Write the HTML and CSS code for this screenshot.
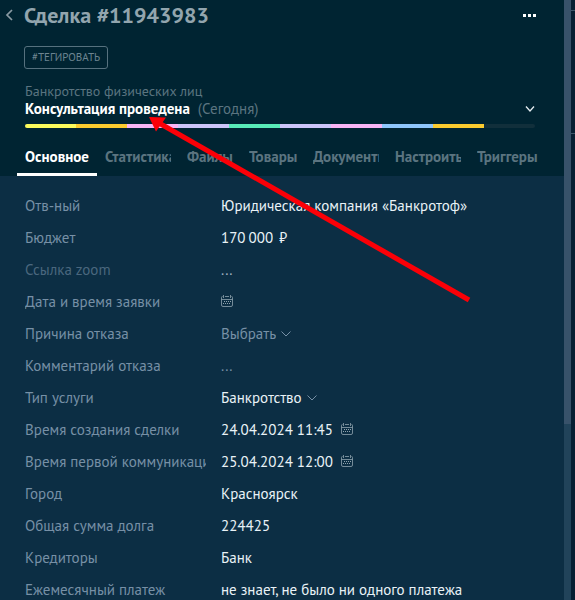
FILE: index.html
```html
<!DOCTYPE html>
<html lang="ru">
<head>
<meta charset="utf-8">
<meta name="viewport" content="width=device-width, initial-scale=1">
<title>Сделка #11943983</title>
<link rel="stylesheet" href="styles.css">
</head>
<body>
<svg class="defs" aria-hidden="true">
  <symbol id="calendar" viewBox="0 0 12 12">
    <path d="M1.500 1.500a1 1 0 0 0-1 1v7.500A1.500 1.500 0 0 0 2 11.500h8a1.500 1.500 0 0 0 1.500-1.500V2.500a1 1 0 0 0-1-1M4 1.500h4M2.500 0v3M9.500 0v3M.5 4.500h11" fill="none" stroke="currentColor" stroke-width=".8"/>
    <path d="M3 6.500h7M2 8.500h7" fill="none" stroke="currentColor" stroke-dasharray="1 1"/>
  </symbol>
  <symbol id="chevron" viewBox="0 0 10 6">
    <path d="M.5.5 5 5 9.500.5" fill="none" stroke="currentColor"/>
  </symbol>
</svg>
<div class="app">
  <main class="card">
    <header class="head">
      <div class="title-row">
        <button class="icon-btn back" aria-label="Назад">
          <svg width="8" height="12" viewBox="0 0 8 12"><path d="M7 1 2 6l5 5" fill="none" stroke="currentColor" stroke-width="1.700"/></svg>
        </button>
        <h1 class="title">Сделка #11943983</h1>
        <button class="icon-btn more" aria-label="Ещё">
          <svg width="13" height="3" viewBox="0 0 13 3"><path d="M0 0h3v3H0zM5 0h3v3H5zM10 0h3v3h-3z" fill="currentColor"/></svg>
        </button>
      </div>
      <div class="summary">
        <button class="tag">#ТЕГИРОВАТЬ</button>
        <div class="pipeline">Банкротство физических лиц</div>
        <button class="status">
          <span><b class="status-name">Консультация проведена</b> <span class="status-date">(Сегодня)</span></span>
          <svg width="10" height="6" viewBox="0 0 10 6"><path d="M1 .5 5 5 9 .5" fill="none" stroke="currentColor" stroke-width="1.300"/></svg>
        </button>
        <div class="progress">
          <i class="yellow"></i><i class="amber"></i><i class="pink"></i><i class="lilac"></i><i class="green"></i><i class="lilac"></i><i class="pink"></i><i class="blue"></i><i class="amber"></i><i></i>
        </div>
      </div>
      <nav class="tabs">
        <a class="tab active" href="#main"><span>Основное</span></a>
        <a class="tab" href="#stats"><span>Статистика</span></a>
        <a class="tab" href="#files"><span>Файлы</span></a>
        <a class="tab" href="#goods"><span>Товары</span></a>
        <a class="tab" href="#docs"><span>Документы</span></a>
        <a class="tab" href="#setup"><span>Настроить</span></a>
        <a class="tab" href="#triggers"><span>Триггеры</span></a>
      </nav>
    </header>
    <form class="fields">
      <div class="row"><label for="owner">Отв-ный</label><input id="owner" value="Юридическая компания «Банкротоф»"></div>
      <div class="row"><label for="budget">Бюджет</label><div class="value money"><input id="budget" class="fit" value="170&#8201;000"><span>₽</span></div></div>
      <div class="row dim"><label for="zoom">Ссылка zoom</label><input id="zoom" placeholder="..."></div>
      <div class="row"><label for="request">Дата и время заявки</label><div class="value"><button type="button" id="request" class="icon-btn cal" aria-label="Выбрать дату"><svg width="12" height="12"><use href="#calendar"/></svg></button></div></div>
      <div class="row"><label for="reason">Причина отказа</label><div class="value choice empty"><select id="reason"><option>Выбрать</option></select><svg width="10" height="6"><use href="#chevron"/></svg></div></div>
      <div class="row"><label for="comment">Комментарий отказа</label><input id="comment" class="faint" placeholder="..."></div>
      <div class="row"><label for="service">Тип услуги</label><div class="value choice"><select id="service"><option>Банкротство</option></select><svg width="10" height="6"><use href="#chevron"/></svg></div></div>
      <div class="row"><label for="created">Время создания сделки</label><div class="value"><input id="created" class="fit" value="24.04.2024 11:45"><button type="button" class="icon-btn cal" aria-label="Выбрать дату"><svg width="12" height="12"><use href="#calendar"/></svg></button></div></div>
      <div class="row"><label for="first">Время первой коммуникации</label><div class="value"><input id="first" class="fit" value="25.04.2024 12:00"><button type="button" class="icon-btn cal" aria-label="Выбрать дату"><svg width="12" height="12"><use href="#calendar"/></svg></button></div></div>
      <div class="row"><label for="city">Город</label><input id="city" value="Красноярск"></div>
      <div class="row"><label for="debt">Общая сумма долга</label><input id="debt" value="224425"></div>
      <div class="row"><label for="creditors">Кредиторы</label><input id="creditors" value="Банк"></div>
      <div class="row"><label for="payment">Ежемесячный платеж</label><input id="payment" value="не знает, не было ни одного платежа"></div>
    </form>
  </main>
  <div class="scroll"><div class="thumb"></div></div>
  <aside class="feed"><div class="feed-head"></div><div class="feed-block"></div></aside>
</div>
<svg class="arrow" width="575" height="310" viewBox="0 0 575 310" aria-hidden="true">
  <path d="M159 123 469 300" stroke="#fb0007" stroke-width="5"/>
  <path d="M149 117 166 117.500 156 131.500Z" fill="#fb0007"/>
</svg>
</body>
</html>
```
FILE: styles.css
```css
* { box-sizing: border-box; }

body {
  margin: 0;
  height: 100vh;
  overflow: hidden;
  background: #0c2e44;
  color: #e9f2f7;
  font: 15px/20px "PT Sans", "Noto Sans", sans-serif;
}

button, input, select {
  margin: 0;
  padding: 0;
  border: 0;
  background: none;
  color: inherit;
  font: inherit;
}

svg { display: block; flex: none; }

.defs { position: absolute; width: 0; height: 0; }

.app { display: flex; height: 100%; }

.card { flex: 1; min-width: 0; }

.head { background: #002432; }

.title-row {
  display: flex;
  align-items: center;
  height: 30px;
  padding: 0 28px 0 5px;
}

.icon-btn { display: flex; align-items: center; }

.back { width: 19px; color: #8a9ba4; }

.more { color: #fff; }

.title {
  flex: 1;
  margin: 0;
  color: #92a5ae;
  font-size: 22px;
  line-height: 30px;
}

.summary { padding: 16px 29px 0 24px; }

.tag {
  display: block;
  height: 23px;
  padding: 0 7px;
  border: 1px solid #56717e;
  border-radius: 3px;
  color: #6d8591;
  font-size: 11px;
  line-height: 21px;
}

.pipeline {
  margin: 14px 0 0 1px;
  color: #5b7480;
  font-size: 14px;
  line-height: 16px;
}

.status {
  display: flex;
  align-items: center;
  justify-content: space-between;
  width: 100%;
  padding-left: 1px;
  color: #e3ecf0;
  line-height: 20px;
  text-align: left;
}

.status-name { margin-right: 4px; color: #fff; }

.status-date { color: #5b7480; }

.progress {
  display: flex;
  height: 4px;
  margin: 5px 0 0 1px;
  border-radius: 2px;
  overflow: hidden;
  background: #112f3b;
}

.progress i { flex: 1; }
.yellow { background: #fbfb5c; }
.amber { background: #fbcb2f; }
.pink { background: #f8b4f4; }
.lilac { background: #ccc5f9; }
.green { background: #58ebb8; }
.blue { background: #8ec6fb; }

.tabs {
  display: grid;
  grid-template-columns: 80px 82px 62px 64px 82px 82px 1fr;
  height: 48px;
  padding: 0 17px;
}

.tab {
  padding: 13px 8px 0;
  border-bottom: 3px solid transparent;
  color: #5b7480;
  font-weight: bold;
  line-height: 32px;
  text-decoration: none;
}

.tab span { display: block; overflow: hidden; white-space: nowrap; }

.tab.active { border-color: #fff; color: #fff; }

.fields { padding: 14px 25px 0; }

.row {
  display: grid;
  grid-template-columns: 181px 1fr;
  column-gap: 15px;
  align-items: center;
  height: 32px;
}

.row label { overflow: hidden; color: #7790a6; white-space: nowrap; }

.row input { min-width: 0; }

.row.dim label { color: #4a677e; }

.row input::placeholder { color: #a3b4c0; opacity: 1; }

.row .faint::placeholder { color: #7790a6; }

.value { display: flex; align-items: center; gap: 8px; }

.money { gap: 6px; }

.fit, select { field-sizing: content; }

select { appearance: none; }

.choice { gap: 5px; }

.choice svg { color: #7790a6; }

.empty { color: #7790a6; }

.cal { padding-bottom: 2px; color: #8fa3ae; }

.scroll { width: 7px; background: #21435a; }

.thumb { height: 70.6vh; background: #38526a; }

.feed { width: 4px; background: #061f33; }

.feed-head { height: 11px; border-bottom: 1px solid #3c566a; }

.feed-block { height: 123px; border-bottom: 1px solid #3c566a; }

.arrow { position: absolute; top: 0; left: 0; pointer-events: none; }
```
